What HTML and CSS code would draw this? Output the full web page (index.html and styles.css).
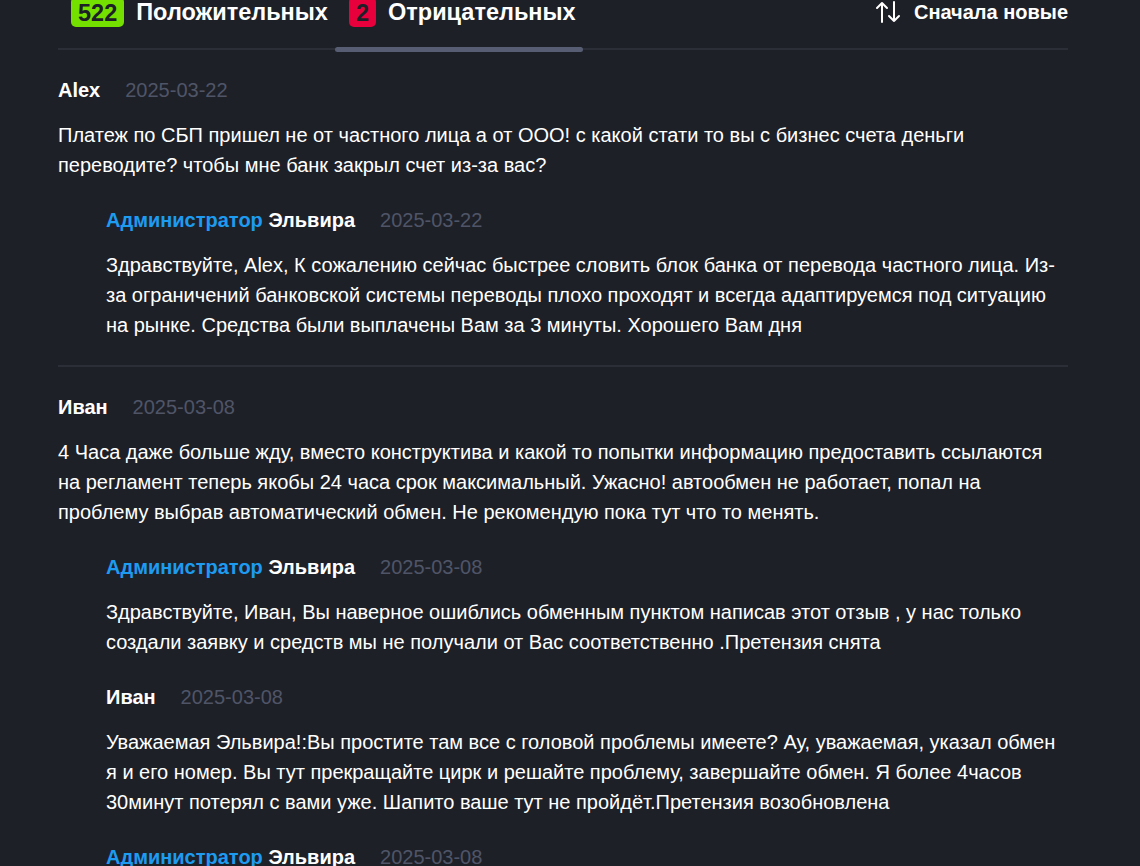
FILE: index.html
```html
<!DOCTYPE html>
<html lang="ru">
<head>
<meta charset="utf-8">
<title>Отзывы</title>
<link rel="stylesheet" href="styles.css">
</head>
<body>
<div class="page">
  <div class="tabs-bar">
    <div class="tabs">
      <div class="tab">
        <span class="badge badge-pos">522</span>
        <span class="tab-label">Положительных</span>
      </div>
      <div class="tab tab-active">
        <span class="badge badge-neg">2</span>
        <span class="tab-label">Отрицательных</span>
      </div>
    </div>
    <div class="sort">
      <svg class="sort-icon" width="26" height="24" viewBox="0 0 26 24" fill="none" stroke="#fff" stroke-width="2" stroke-linecap="round" stroke-linejoin="round">
        <path d="M7 22V3M2 8l5-5 5 5"/>
        <path d="M19 2v19M14 16l5 5 5-5"/>
      </svg>
      <span class="sort-label">Сначала новые</span>
    </div>
  </div>

  <div class="review">
    <div class="meta"><span class="author">Alex</span><span class="date">2025-03-22</span></div>
    <p class="text">Платеж по СБП пришел не от частного лица а от ООО! с какой стати то вы с бизнес счета деньги переводите? чтобы мне банк закрыл счет из-за вас?</p>
    <div class="reply">
      <div class="meta"><span class="role">Администратор</span> <span class="author">Эльвира</span><span class="date">2025-03-22</span></div>
      <p class="text">Здравствуйте, Alex, К сожалению сейчас быстрее словить блок банка от перевода частного лица. Из-за ограничений банковской системы переводы плохо проходят и всегда адаптируемся под ситуацию на рынке. Средства были выплачены Вам за 3 минуты. Хорошего Вам дня</p>
    </div>
  </div>

  <div class="review">
    <div class="meta"><span class="author">Иван</span><span class="date">2025-03-08</span></div>
    <p class="text">4 Часа даже больше жду, вместо конструктива и какой то попытки информацию предоставить ссылаются на регламент теперь якобы 24 часа срок максимальный. Ужасно! автообмен не работает, попал на проблему выбрав автоматический обмен. Не рекомендую пока тут что то менять.</p>
    <div class="reply">
      <div class="meta"><span class="role">Администратор</span> <span class="author">Эльвира</span><span class="date">2025-03-08</span></div>
      <p class="text">Здравствуйте, Иван, Вы наверное ошиблись обменным пунктом написав этот отзыв , у нас только создали заявку и средств мы не получали от Вас соответственно .Претензия снята</p>
    </div>
    <div class="reply">
      <div class="meta"><span class="author">Иван</span><span class="date">2025-03-08</span></div>
      <p class="text">Уважаемая Эльвира!:Вы простите там все с головой проблемы имеете? Ау, уважаемая, указал обмен я и его номер. Вы тут прекращайте цирк и решайте проблему, завершайте обмен. Я более 4часов 30минут потерял с вами уже. Шапито ваше тут не пройдёт.Претензия возобновлена</p>
    </div>
    <div class="reply">
      <div class="meta"><span class="role">Администратор</span> <span class="author">Эльвира</span><span class="date">2025-03-08</span></div>
      <p class="text">Здравствуйте, Иван, заявка обработана.</p>
    </div>
  </div>
</div>
</body>
</html>
```

FILE: styles.css
```css
html, body {
  margin: 0;
  padding: 0;
  background: #1e2028;
  color: #ffffff;
  font-family: "Liberation Sans", Arial, sans-serif;
  overflow: hidden;
}

.page {
  width: 1010px;
  margin: -3px 0 0 58px;
}

.tabs-bar {
  display: flex;
  justify-content: space-between;
  align-items: flex-start;
  border-bottom: 2px solid #2c2e37;
}

.tabs {
  display: flex;
}

.tab {
  position: relative;
  display: flex;
  align-items: center;
  padding: 0 7px 21px 14px;
}

.tab:first-child {
  padding-left: 13px;
}

.tab-active::after {
  content: "";
  position: absolute;
  left: 0;
  right: 0;
  bottom: -4px;
  height: 5px;
  border-radius: 3px;
  background: #575d73;
}

.badge {
  display: inline-block;
  height: 30px;
  line-height: 32px;
  padding: 0 7px;
  border-radius: 5px;
  color: #1e2028;
  font-size: 23.5px;
  font-weight: 700;
  margin-right: 12px;
}

.badge-pos { background: #73e000; }
.badge-neg { background: #e8003d; }

.tab-label {
  font-size: 23.5px;
  font-weight: 700;
  line-height: 30px;
}

.sort {
  display: flex;
  align-items: center;
  padding-top: 3px;
}

.sort-icon {
  margin-right: 13px;
}

.sort-label {
  font-size: 20px;
  font-weight: 700;
  line-height: 24px;
}

.review {
  padding: 25px 0 25px;
  border-bottom: 2px solid #2c2e37;
}

.meta {
  font-size: 20px;
  line-height: 30px;
}

.author {
  font-weight: 700;
  color: #ffffff;
}

.role {
  font-weight: 700;
  color: #1d9bf0;
}

.date {
  color: #4f5567;
  margin-left: 25px;
}

.text {
  margin: 15px 0 0;
  font-size: 20px;
  line-height: 30px;
}

.reply {
  margin-top: 25px;
  padding-left: 48px;
}
```
